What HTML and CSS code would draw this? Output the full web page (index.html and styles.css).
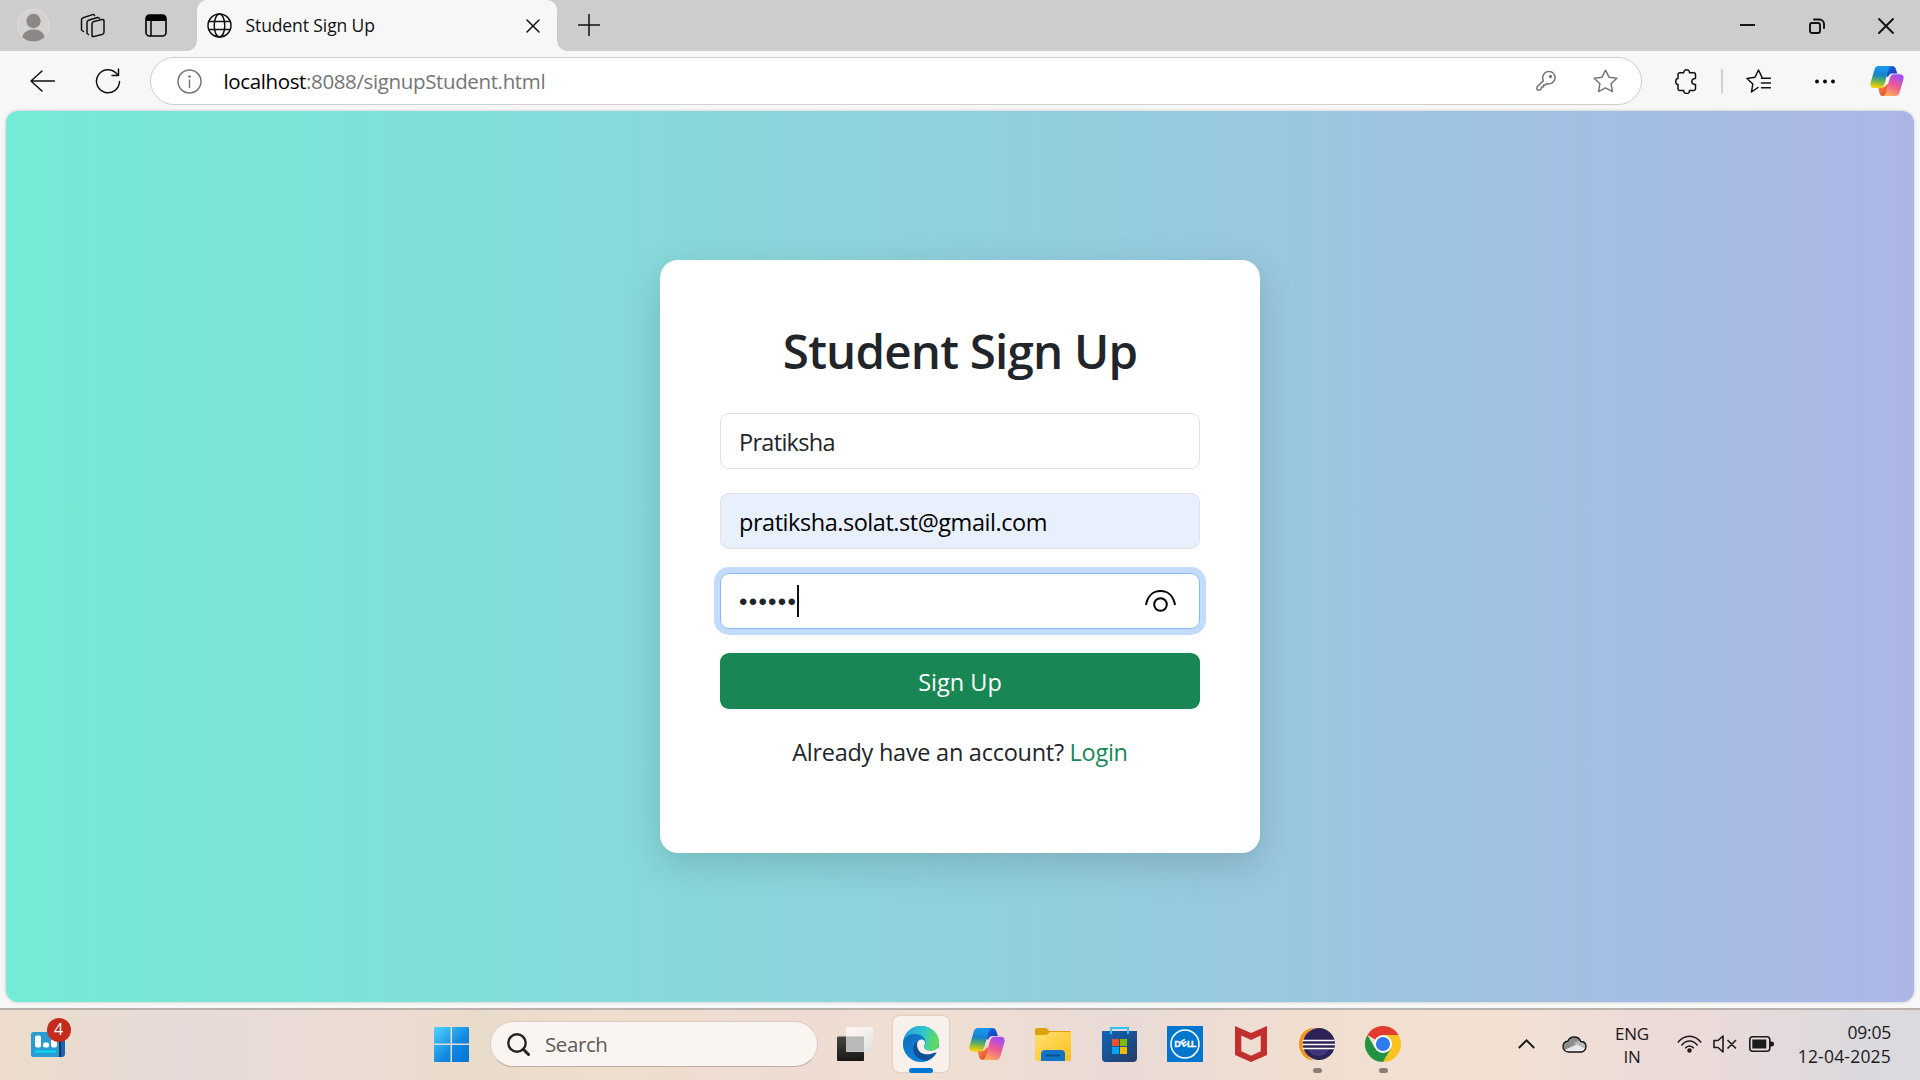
FILE: index.html
```html
<!DOCTYPE html>
<html lang="en">
<head>
<meta charset="utf-8">
<title>Student Sign Up</title>
<link rel="stylesheet" href="styles.css">
</head>
<body>
<svg class="defs" width="0" height="0" aria-hidden="true">
  <defs>
    <linearGradient id="cpA" x1=".4" y1="0" x2=".3" y2="1"><stop offset=".1" stop-color="#1795ee"/><stop offset=".4" stop-color="#1683c8"/><stop offset=".65" stop-color="#5cae5f"/><stop offset=".95" stop-color="#f2cf08"/></linearGradient>
    <linearGradient id="cpB" x1=".7" y1="0" x2=".3" y2="1"><stop offset=".05" stop-color="#a64df2"/><stop offset=".5" stop-color="#ee5a94"/><stop offset="1" stop-color="#ffae58"/></linearGradient>
    <linearGradient id="cpC" x1="0" y1="0" x2="1" y2="1"><stop offset="0" stop-color="#1b6be0"/><stop offset="1" stop-color="#1238b8"/></linearGradient>
    <linearGradient id="cpD" x1="0" y1="0" x2="1" y2="1"><stop offset="0" stop-color="#ff9440"/><stop offset="1" stop-color="#d9382f"/></linearGradient>
    <linearGradient id="win" x1="0" y1="0" x2="1" y2="1"><stop offset="0" stop-color="#4fd3ff"/><stop offset=".6" stop-color="#0f86e0"/><stop offset="1" stop-color="#0074d4"/></linearGradient>
    <linearGradient id="edA" x1="0" y1=".4" x2="1" y2=".6"><stop offset="0" stop-color="#1f9fdf"/><stop offset=".5" stop-color="#31c5cf"/><stop offset="1" stop-color="#65e04c"/></linearGradient>
    <linearGradient id="edB" x1="0" y1="0" x2=".4" y2="1"><stop offset="0" stop-color="#136fb8"/><stop offset="1" stop-color="#0a84dc"/></linearGradient>
    <linearGradient id="fold" x1="0" y1="0" x2="1" y2="1"><stop offset="0" stop-color="#ffe070"/><stop offset="1" stop-color="#fcbf1d"/></linearGradient>
    <linearGradient id="store" x1="0" y1="0" x2="1" y2="1"><stop offset="0" stop-color="#0d66b8"/><stop offset="1" stop-color="#263a66"/></linearGradient>
    <linearGradient id="tvA" x1="0" y1="0" x2="0" y2="1"><stop offset="0" stop-color="#474541"/><stop offset="1" stop-color="#171716"/></linearGradient>
    <linearGradient id="tvB" x1="0" y1="0" x2="1" y2="1"><stop offset="0" stop-color="#fff" stop-opacity=".75"/><stop offset=".5" stop-color="#f3f3f3" stop-opacity=".85"/><stop offset="1" stop-color="#ddd"/></linearGradient>
    <symbol id="copilot" viewBox="0 0 36 34">
      <path d="M18 1h5c2 0 3.500.8 4 2.500L29 9h-5c-3 0-4.500 2-5 4l-3-3z" fill="url(#cpC)"/>
      <path d="M18 33h-4c-2 0-3.300-1-3.800-2.800L8.700 24H12c3.500 0 5-1.500 6-4l3 4z" fill="url(#cpD)"/>
      <path d="M9 1h14.500c-2 .3-3.100 1.600-3.700 3.600l-4.500 15.500c-.8 2.900-2.400 4.400-5.300 4.400H4.500c-3.500 0-4.800-2.500-3.900-5.700L4.700 4.700C5.400 2.300 6.700 1 9 1z" fill="url(#cpA)"/>
      <path d="M27.200 33H13c2-.4 3-1.700 3.600-3.600l4.300-15.300c.8-2.800 2.200-4.300 5-4.300h5.700c3.400 0 4.700 2.400 3.800 5.500l-4 14C30.700 31.700 29.400 33 27.200 33z" fill="url(#cpB)"/>
    </symbol>
  </defs>
</svg>

<div class="desktop">
  <header class="tabstrip">
    <div class="slot slot-profile">
      <svg width="33" height="33" viewBox="0 0 33 33"><circle cx="16.500" cy="16.500" r="16" fill="#d3d2cf" stroke="#dedddb"/><circle cx="16.500" cy="12" r="7.200" fill="#8b8784"/><path d="M5.300 28C6.500 23 11 20.500 16.500 20.500S26.500 23 27.700 28C24.500 31 20.500 32.500 16.500 32.500S8.500 31 5.300 28z" fill="#8b8784"/></svg>
    </div>
    <div class="slot slot-spaces">
      <svg class="line" width="26" height="26" viewBox="0 0 26 26"><rect x="12" y="7.500" width="12" height="15" rx="2" transform="skewY(-14) translate(0 4.500)"/><path d="M8.500 21.500 7 20.500V9.500c0-1 .6-1.800 1.500-2.200L17.500 4.500c1-.3 1.500 0 2 1"/><path d="M3.500 18.500 1.500 17V7c0-1 .7-2 1.700-2.300L12.500 1.600c.9-.3 1.600 0 2 .9"/></svg>
    </div>
    <div class="slot slot-actions">
      <svg width="22" height="23" viewBox="0 0 22 23"><rect x="1" y="1" width="20" height="21" rx="3.500" fill="none" stroke="#000" stroke-width="1.600"/><path d="M1 7V4a3 3 0 0 1 3-3h14a3 3 0 0 1 3 3v3z"/><path d="M6 7v15" stroke="#000" stroke-width="1.500"/></svg>
    </div>
    <div class="tab">
      <svg class="line" width="25" height="25" viewBox="0 0 25 25"><circle cx="12.500" cy="12.500" r="11.500"/><ellipse cx="12.500" cy="12.500" rx="5.300" ry="11.500"/><path d="M2 8.500h21M2 16.500h21"/></svg>
      <span class="tab-title">Student Sign Up</span>
      <svg class="line tab-close" width="14" height="14" viewBox="0 0 14 14"><path d="m1 1 12 12M13 1 1 13"/></svg>
    </div>
    <svg class="line new-tab" width="22" height="22" viewBox="0 0 22 22"><path d="M11 .5v21M.5 11h21"/></svg>
    <div class="window-controls">
      <svg width="15" height="15" viewBox="0 0 15 15"><path d="M0 7h15" stroke="#000" stroke-width="1.800"/></svg>
      <svg class="line bold" width="16" height="16" viewBox="0 0 16 16"><rect x="1" y="5" width="10" height="10" rx="2"/><path d="M5 1.500h5.500A4.500 4.500 0 0 1 15 6v4"/></svg>
      <svg class="line bold" width="16" height="16" viewBox="0 0 16 16"><path d="m1 1 14 14M15 1 1 15"/></svg>
    </div>
  </header>

  <div class="toolbar">
    <svg class="line back" width="25" height="22" viewBox="0 0 25 22"><path d="M12 1 1 11l11 10M1 11h23.500"/></svg>
    <svg class="line reload" width="26" height="26" viewBox="0 0 26 26"><path d="M24.500 13.500A11.500 11.500 0 1 1 21.500 5.500L23.500 7.500M23.500 1v6.500H17"/></svg>
    <div class="address">
      <svg class="line gray" width="25" height="25" viewBox="0 0 25 25"><circle cx="12.500" cy="12.500" r="11.500"/><path d="M12.500 11v7.500"/><circle cx="12.500" cy="7.500" r=".6"/></svg>
      <span class="url"><b>localhost</b>:8088/signupStudent.html</span>
      <svg class="line gray key" width="20" height="20" viewBox="0 0 20 20"><path d="M7.400 9.600A6.200 6.200 0 1 1 10.700 12.500L9.500 14H7.500v2H5.500v1.500L4 19H1.500L1 18.500V16z"/><circle cx="14.500" cy="5.500" r=".9"/></svg>
      <svg class="line gray" width="25" height="24" viewBox="0 0 25 24"><path d="m12.500 1.200 3.500 7 7.800 1.100-5.700 5.500 1.400 7.800-7-3.700-7 3.700 1.400-7.800-5.700-5.500L9 8.200z"/></svg>
    </div>
    <svg class="line puzzle" width="22" height="25" viewBox="0 0 22 25"><path d="M3 5.500c0-1 .7-1.700 1.700-1.700h4c-.2-4 6-4 5.800 0h4.300c1 0 1.700.7 1.700 1.700v4c-5-.3-5 6.300 0 6v4.300c0 1-.7 1.700-1.700 1.700h-4.300c.2 4-6 4-5.800 0h-4c-1 0-1.700-.7-1.700-1.700V15.500c-3-.2-3-5.800 0-6z"/></svg>
    <span class="divider"></span>
    <svg class="line favs" width="25" height="25" viewBox="0 0 25 25"><path d="M12 18.500 5.500 23l1.300-8L1 9.500 9 8.300l3.500-7.300L16 8.300M15.500 9.300H24.500M15.500 14h9M15.500 18.800h9"/></svg>
    <svg class="dots" width="20" height="5" viewBox="0 0 20 5"><circle cx="2" cy="2.500" r="1.900"/><circle cx="10" cy="2.500" r="1.900"/><circle cx="18" cy="2.500" r="1.900"/></svg>
    <svg class="assistant" width="34" height="32"><use href="#copilot"/></svg>
  </div>

  <main class="viewport">
    <div class="page">
      <form class="card">
        <h2>Student Sign Up</h2>
        <div class="field name">Pratiksha</div>
        <div class="field autofilled">pratiksha.solat.st@gmail.com</div>
        <div class="field focused">
          <span class="mask">••••••</span><i class="caret"></i>
          <svg class="reveal" width="31" height="24" viewBox="0 0 31 24" fill="none" stroke="#000" stroke-width="2"><path d="M1 16C2.500 7 8 2 15.500 2S28.500 7 30 16"/><circle cx="15.500" cy="15.500" r="6.300"/></svg>
        </div>
        <button class="submit" type="button">Sign Up</button>
        <p>Already have an account? <a>Login</a></p>
      </form>
    </div>
  </main>

  <footer class="taskbar">
    <div class="widget">
      <svg width="34" height="25" viewBox="0 0 34 25"><path d="M25 0h6a3 3 0 0 1 3 3v19a3 3 0 0 1-3 3h-6z" fill="#1765b5"/><rect width="29" height="25" rx="2.500" fill="#2b9ccf"/><path d="M29 7v18" stroke="#061c32" stroke-width="1.500"/><path d="M4 19.500h21" stroke="#08d5f5" stroke-width="2.500"/><rect x="4" y="3.500" width="6" height="12" rx="2" fill="#fff"/><rect x="12" y="10.500" width="6" height="5" rx="2" fill="#fff"/><rect x="20" y="7" width="6" height="8.500" rx="2" fill="#fff"/></svg>
      <span class="count">4</span>
    </div>
    <svg class="start" width="35" height="35" viewBox="0 0 35 35" fill="url(#win)"><path d="M1 0h15.500v16.500H0V1a1 1 0 0 1 1-1zM18 0h16a1 1 0 0 1 1 1v15.500H18zM0 18h16.500v17H1a1 1 0 0 1-1-1zM18 18h17v16a1 1 0 0 1-1 1H18z"/></svg>
    <div class="search">
      <svg width="23" height="23" viewBox="0 0 23 23" fill="none" stroke="#242424" stroke-width="2.400" stroke-linecap="round"><circle cx="10" cy="10" r="8.700"/><path d="m16.300 16.300 5.200 5.200" stroke-width="3"/></svg>
      <span>Search</span>
    </div>
    <div class="apps">
      <div class="app"><svg width="36" height="34" viewBox="0 0 36 34"><rect y="9.500" width="27" height="24.500" rx="1" fill="url(#tvA)"/><rect x="9" y="0" width="27" height="25" rx="1" fill="url(#tvB)"/><path d="M9 9.500h18V24.500H9z" fill="#b4b2b0" opacity=".8"/></svg></div>
      <div class="app active"><svg width="36" height="36" viewBox="0 0 36 36"><circle cx="18" cy="18" r="18" fill="url(#edB)"/><path d="M.4 15C2 6 9 0 18 0c10 0 18 7 18 16 0 5-3.500 8.500-8.500 8.500-4.500 0-6.500-2-6.500-3.500 0-1 1.500-2 1.500-5C22.500 11.500 18 8 12 8 6.500 8 2 11 .4 15z" fill="url(#edA)"/><path d="M.4 15C2 11 6 8.500 11 8.500c2.500 0 4.500.5 6 1.500-4 .8-7.500 5-7.500 10 0 9 7.500 15 15 14.500A18 18 0 0 1 .4 15z" fill="url(#edB)"/><path d="M14.500 15c-3 2.500-4.500 5-4.500 7 0 7 6 13 14 12.500 4-1.500 7-4.200 9-7.500.3-.7-.3-1-1-.7-7 3.700-17.500.7-17.500-7.300 0-1.500 0-2.700.8-4z" fill="#124f96"/><path d="M14 18.500c0-3 2-5 4.500-5 2.300 0 3.700 1.700 3.500 3.500-.2 1.500-1 2.500-1 4 0 2 2.500 3.700 6.500 3.700 3.500 0 6-1.200 8-4v4.800c-1.500 1.500-2.500 1.500-3.500 1-7 3.300-15 2-17-3.500-.7-1.700-1-3-1-4.500z" fill="#f8f0ea"/></svg><i class="mark"></i></div>
      <div class="app"><svg width="36" height="34"><use href="#copilot"/></svg></div>
      <div class="app"><svg width="36" height="33" viewBox="0 0 36 33"><path d="M0 1.500A1.500 1.500 0 0 1 1.500 0H11l3.500 3H34.500A1.500 1.500 0 0 1 36 4.500V10H0z" fill="#dfa10a"/><path d="M0 7h11c2 0 2.500-3 4.500-3H36v27.500a1.500 1.500 0 0 1-1.500 1.500h-33A1.500 1.500 0 0 1 0 31.500z" fill="url(#fold)"/><path d="M6 33V26a4 4 0 0 1 4-4h16a4 4 0 0 1 4 4v7z" fill="#1274c6"/><path d="M11 27.500h14" stroke="#0a4e91" stroke-width="2"/></svg></div>
      <div class="app"><svg class="raised" width="35" height="35" viewBox="0 0 35 35"><path d="M0 4h35v27a4 4 0 0 1-4 4H4a4 4 0 0 1-4-4z" fill="url(#store)"/><path d="M9 7V1h17v6" fill="none" stroke="#31c3f5" stroke-width="2"/><path d="M10 12h7v7h-7z" fill="#f25022"/><path d="M18 12h7v7h-7z" fill="#7fba00"/><path d="M10 20h7v7h-7z" fill="#00a4ef"/><path d="M18 20h7v7h-7z" fill="#ffb900"/></svg></div>
      <div class="app"><svg width="36" height="36" viewBox="0 0 36 36"><path d="M0 0h36v36H0z" fill="#0076ce"/><circle cx="18" cy="18" r="14" fill="none" stroke="#fff" stroke-width="1.500"/><g class="dell"><text x="7.300" y="21.300">D</text><text x="17.600" y="20" transform="rotate(-35 17.600 18)" text-anchor="middle">E</text><text x="20" y="21.300" textLength="9.500">LL</text></g></svg></div>
      <div class="app"><svg width="32" height="36" viewBox="0 0 32 36"><path fill-rule="evenodd" d="m0 0 16 7L32 0v29l-16 7-16-7zM6.300 9.500v15.800L16 29.700l9.700-4.400V9.500L16 14z" fill="#c22f2d"/></svg></div>
      <div class="app"><svg width="36" height="34" viewBox="0 0 36 34"><path d="M16 .5C6 1 0 8 0 17s6 16 15 16.500C8 30 5 24 5 17S8.500 3.500 16 .5z" fill="#f7941e"/><circle cx="20" cy="17" r="16" fill="#2c2255"/><path d="M9 22h21c-2 5-6 7-10.500 7S11 27 9 22z" fill="#41357c"/><path d="M3.500 13.500h32M3 17.500h33M3.500 21.500h32" stroke="#fff" stroke-width="1.500"/></svg><i class="mark"></i></div>
      <div class="app"><svg width="36" height="36" viewBox="0 0 36 36"><path d="M18 18 2.400 9A18 18 0 0 1 33.600 9z" fill="#e33b2e"/><path d="M18 9h15.600A18 18 0 0 1 18 36l7.800-13.500z" fill="#fcc31e"/><path d="M2.400 9A18 18 0 0 0 18 36l7.800-13.500L18 18l-7.800 4.500z" fill="#229342"/><circle cx="18" cy="18" r="9" fill="#fff"/><circle cx="18" cy="18" r="7.100" fill="#2f7bee"/></svg><i class="mark"></i></div>
    </div>
    <div class="tray">
      <svg class="chev" width="17" height="10" viewBox="0 0 17 10" fill="none" stroke="#1b1b1b" stroke-width="1.900"><path d="m.8 9 7.700-7.700L16.200 9"/></svg>
      <svg class="cloud" width="25" height="17" viewBox="0 0 25 17"><path d="M6 5C7 2.500 9.500 1 12.300 1c3 0 5.500 1.700 6.500 4.500 3 0 5.200 2 5.200 5.200S21.500 16 19 16H6.500C3 16 1 13.500 1 10.600S3 5.500 6 5z" fill="#8d8d8d"/><path d="M18.800 5.500c3 0 5.200 2 5.200 5.200l-2 1.500L11.500 7.500c2-1.700 4.500-2.500 7.300-2z" fill="#b9b9b9"/><path d="M2.500 14 14.500 8.500 23 12.500c-.7 2.300-2.200 3.500-4 3.500H6.500c-1.700 0-3-.8-4-2z" fill="#e9e9e9"/><path d="M6 5C7 2.500 9.500 1 12.300 1c3 0 5.500 1.700 6.500 4.500 3 0 5.200 2 5.200 5.200S21.500 16 19 16H6.500C3 16 1 13.500 1 10.600S3 5.500 6 5z" fill="none" stroke="#151515" stroke-width="1.300"/></svg>
      <div class="lang">ENG<br>IN</div>
      <svg class="wifi" width="25" height="18" viewBox="0 0 25 18" fill="none" stroke="#1b1b1b" stroke-width="1.500"><path d="M.8 7.500c6.300-8.500 17.100-8.500 23.400 0M4.500 10.500c4.500-6 11.500-6 16 0M8.200 13.300c2.500-3.200 6.100-3.200 8.600 0"/><circle cx="12.500" cy="15.500" r="2.200" fill="#1b1b1b" stroke="none"/></svg>
      <svg class="mute" width="24" height="18" viewBox="0 0 24 18" fill="none" stroke="#1b1b1b" stroke-width="1.600" stroke-linejoin="round"><path d="M1 5.500h4L10 1v16l-5-4.500H1zM14.500 5l8.500 8.500M23 5l-8.500 8.500"/></svg>
      <svg class="battery" width="25" height="16" viewBox="0 0 25 16"><rect x=".8" y=".8" width="20" height="14.400" rx="3" fill="none" stroke="#1b1b1b" stroke-width="1.600"/><rect x="3.300" y="3.500" width="14" height="9" fill="#1b1b1b"/><path d="M21 5.500h1.500a2.500 2.500 0 0 1 0 5H21z" fill="#1b1b1b"/></svg>
      <div class="clock">09:05<br><span>12-04-2025</span></div>
    </div>
  </footer>
</div>
</body>
</html>
```
FILE: styles.css
```css
* { box-sizing: border-box; }
body { margin: 0; font-family: "Open Sans", "Noto Sans", sans-serif; color: #212529; }
svg { display: block; flex: none; }
.defs { position: absolute; }
.line { fill: none; stroke: #111; stroke-width: 1.500; stroke-linecap: round; stroke-linejoin: round; }
.line.gray { stroke: #757575; }
.line.bold { stroke-width: 1.900; }
.desktop { width: 1920px; height: 1080px; display: flex; flex-direction: column; overflow: hidden; background: #f7f7f7; }

/* Tab strip */
.tabstrip { height: 51px; flex: none; display: flex; background: #cdcdcd; }
.slot { display: flex; align-items: center; justify-content: center; }
.slot-profile { width: 66px; }
.slot-spaces { width: 54px; }
.slot-actions { width: 72px; margin-right: 5px; }
.tab { position: relative; width: 360px; display: flex; align-items: center; padding: 0 17px 0 9.500px; background: #f7f7f7; border-radius: 10px 10px 0 0; }
.tab::before, .tab::after { content: ""; position: absolute; bottom: 0; width: 10px; height: 10px; }
.tab::before { left: -10px; background: radial-gradient(circle at 0 0, transparent 9.500px, #f7f7f7 10px); }
.tab::after { right: -10px; background: radial-gradient(circle at 100% 0, transparent 9.500px, #f7f7f7 10px); }
.tab-title { flex: 1; margin-left: 14px; padding-bottom: 1px; font-size: 17.500px; letter-spacing: -.1px; color: #111; }
.new-tab { margin: 14px 0 0 20.500px; }
.window-controls { margin: 17.500px 26px 0 auto; display: flex; gap: 53.500px; }

/* Toolbar */
.toolbar { height: 60px; flex: none; display: flex; align-items: center; }
.back { margin-left: 29.500px; }
.reload { margin-left: 40.500px; }
.address { width: 1492px; height: 48px; margin-left: 29px; padding: 0 23px 0 25.500px; display: flex; align-items: center; border: 1.500px solid #cfcfcf; border-radius: 24px; background: #fff; }
.url { flex: 1; margin-left: 22px; font-size: 20.500px; line-height: 30px; letter-spacing: -.37px; color: #757575; }
.url b { font-weight: 400; color: #000; }
.key { margin-right: 37.500px; }
.puzzle { margin-left: 33px; }
.divider { width: 2px; height: 24px; margin-left: 24px; background: #cfcfcf; }
.favs { margin-left: 22.500px; }
.dots { margin-left: 44px; }
.assistant { margin-left: 35.500px; }

/* Page */
.viewport { height: 899px; flex: none; padding: 0 6px 6px; border-bottom: 2px solid #b9b1ab; }
.page { height: 891px; display: flex; align-items: center; justify-content: center; border-radius: 12px; background: linear-gradient(90deg, #74ebd5, #acb6e5); box-shadow: 0 0 3px rgba(0, 0, 0, .25); }
.card { width: 600px; height: 593px; padding: 60px; border-radius: 18px; background: #fff; box-shadow: 0 12px 36px rgba(0, 0, 0, .15); }
.card h2 { margin: 0 0 34px; padding-top: 3px; font-size: 47.500px; font-weight: 600; line-height: 55.500px; letter-spacing: -.8px; text-align: center; }
.field { height: 56px; margin-bottom: 24px; padding: 2px 18px 0; display: flex; align-items: center; border: 1px solid #dee2e6; border-radius: 9px; font-size: 23.500px; letter-spacing: -.46px; }
.field.name { letter-spacing: -.7px; }
.field.autofilled { background: #e8f0fe; color: #000; }
.field.focused { border-color: #86b7fe; box-shadow: 0 0 0 6px #c2dbff; }
.mask { padding-top: 1px; font: 24px/1 "Liberation Sans", sans-serif; letter-spacing: 1.300px; }
.caret { width: 2px; height: 32px; margin-bottom: 2px; background: #111; }
.reveal { margin: 0 5px 2px auto; }
.submit { display: block; width: 100%; height: 56px; padding: 2px 0 0; border: 0; border-radius: 9px; background: #198754; color: #fff; font: 23.500px "Open Sans", sans-serif; text-align: center; }
.card p { margin: 25px 0 0; font-size: 23.500px; line-height: 36px; letter-spacing: -.27px; text-align: center; }
.card a { color: #198754; }

/* Taskbar */
.taskbar { height: 70px; flex: none; display: flex; align-items: center; padding-bottom: 2px; color: #1b1b1b;
  background: linear-gradient(90deg, #eddccb 0, #e6dbd8 180px, #eddcd5 360px, #e9dbca 480px, #eedecd 600px, #eedcd3 820px, #f0dfd2 930px, #e9dad6 1120px, #f0dfd0 1300px, #f2e1d2 1500px, #eddbd8 1640px, #ecdad9 1700px, #dbd9de 1860px, #dddadf 1920px); }
.widget { position: relative; margin: 0 369px 0 31px; }
.count { position: absolute; left: 15.500px; top: -14px; width: 24px; height: 24px; border-radius: 50%; background: #c42b1c; color: #fff; font-size: 16px; line-height: 23px; text-align: center; }
.search { width: 328px; height: 46px; margin-left: 21px; padding-left: 16px; display: flex; align-items: center; border: 1.500px solid #dccbc0; border-bottom-color: #bcaea3; border-radius: 23px; background: #faf5f1; color: #5d5a58; }
.search span { margin-left: 15px; font-size: 20.500px; letter-spacing: -.4px; }
.apps { display: flex; gap: 10px; margin-left: 9px; }
.app { position: relative; width: 56px; height: 56px; display: flex; align-items: center; justify-content: center; border-radius: 6px; }
.app.active { background: #f8f0ea; box-shadow: 0 0 2px rgba(120, 80, 50, .35); }
.dell { fill: #fff; stroke: #fff; stroke-width: .3; font: 700 9px "Liberation Sans", sans-serif; }
.mark { position: absolute; left: 24px; bottom: -1px; width: 9px; height: 5px; border-radius: 2.500px; background: #887f77; }
.active .mark { left: 16px; width: 24px; background: #0078d4; }
.tray { display: flex; align-items: center; margin-left: 107px; }
.cloud { margin-left: 27px; }
.lang { width: 50px; margin-left: 20px; padding-top: 1px; font-size: 17px; line-height: 23px; text-align: center; letter-spacing: -.2px; }
.wifi { margin-left: 19.500px; margin-top: -1px; }
.mute { margin-left: 11px; }
.battery { margin-left: 12px; }
.clock { width: 110px; margin-left: 7.500px; font-size: 17.500px; line-height: 24px; text-align: right; letter-spacing: -.2px; }
.clock span { letter-spacing: .2px; }
```
